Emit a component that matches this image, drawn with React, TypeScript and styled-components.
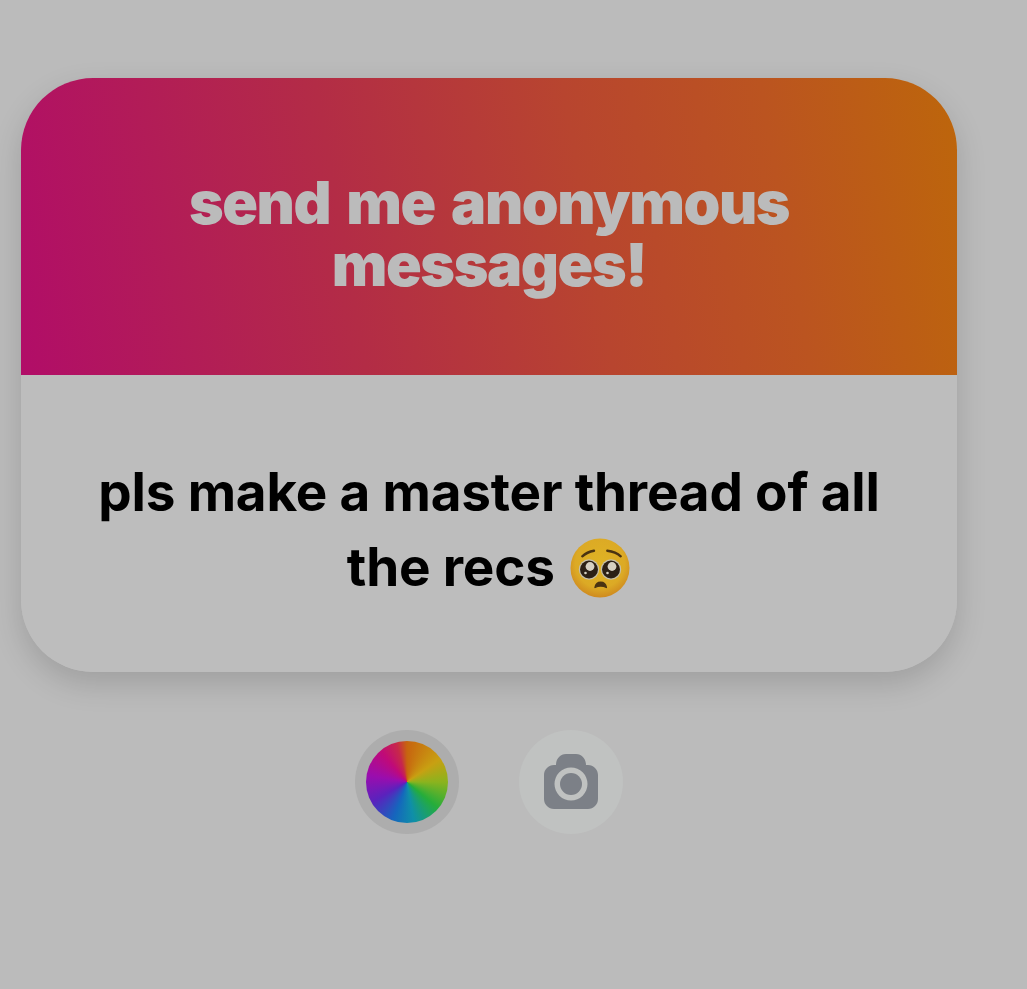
import React from "react";
import styled, { createGlobalStyle } from "styled-components";

const Global = createGlobalStyle`
  html, body { margin: 0; padding: 0; background: #bbbbbb; }
  body { font-family: Inter, "Liberation Sans", sans-serif; }
`;

const Page = styled.main`
  width: 1027px;
  height: 989px;
  overflow: hidden;
  background: #bbbbbb;
  padding: 78px 70px 0 21px;
  box-sizing: border-box;
  display: flex;
  flex-direction: column;
  align-items: flex-start;
`;

const CardShadow = styled.div`
  border-radius: 72px;
  box-shadow: 0 12px 30px rgba(0, 0, 0, 0.15);
`;

const Card = styled.section`
  width: 936px;
  height: 594px;
  flex: none;
  border-radius: 72px;
  overflow: hidden;
  background: #bdbdbd;
  display: flex;
  flex-direction: column;
`;

const Header = styled.header`
  height: 297px;
  background: linear-gradient(80deg, #b10d68 0%, #b32c46 35%, #b8452f 60%, #bb5420 80%, #bd660b 100%);
  display: flex;
  align-items: center;
  justify-content: center;
  box-sizing: border-box;
  padding: 15px 120px 0;
`;

const Title = styled.h1`
  margin: 0;
  color: #bbbbbb;
  font-size: 59px;
  line-height: 62px;
  font-weight: 900;
  letter-spacing: -1.4px;
  word-spacing: 5.8px;
  text-align: center;
`;

const Body = styled.div`
  flex: 1;
  display: flex;
  align-items: center;
  justify-content: center;
  padding: 12px 60px 0;
`;

const Message = styled.p`
  margin: 0;
  color: #000;
  font-size: 53px;
  line-height: 75px;
  font-weight: 700;
  letter-spacing: -0.18px;
  text-align: center;
`;

const Emoji = styled.svg`
  display: inline-block;
  width: 62px;
  height: 62px;
  vertical-align: -13px;
  margin-left: 2px;
`;

const Actions = styled.div`
  align-self: stretch;
  width: 936px;
  margin-top: 58px;
  display: flex;
  justify-content: center;
  gap: 60px;
`;

const RoundButton = styled.button<{ $selected?: boolean }>`
  width: 104px;
  height: 104px;
  border: 0;
  padding: 0;
  border-radius: 50%;
  background: ${(p) => (p.$selected ? "#adadad" : "#c0c2c1")};
  display: flex;
  align-items: center;
  justify-content: center;
`;

const Wheel = styled.span`
  width: 82px;
  height: 82px;
  border-radius: 50%;
  background: conic-gradient(
    #c7640f 0deg,
    #c8a012 55deg,
    #8bb31e 90deg,
    #25ad3b 130deg,
    #0f8fa8 170deg,
    #1566bd 200deg,
    #5a22bd 240deg,
    #9a0dae 280deg,
    #c00a78 320deg,
    #c7284a 345deg,
    #c7640f 360deg
  );
  filter: blur(0.4px);
`;

const PleadingFace = () => (
  <Emoji viewBox="0 0 62 62" aria-label="pleading face">
    <defs>
      <radialGradient id="face" cx="50%" cy="42%" r="58%">
        <stop offset="0%" stopColor="#dfb324" />
        <stop offset="72%" stopColor="#dcaa25" />
        <stop offset="100%" stopColor="#cf8a1f" />
      </radialGradient>
    </defs>
    <circle cx="31" cy="31" r="29.500" fill="url(#face)" />
    <path d="M13.300 19.300c3-2.800 7-4.800 11.700-5.600" fill="none" stroke="#4a3312" strokeWidth="2.400" strokeLinecap="round" />
    <path d="M51.700 19.300c-3-2.800-7-4.800-13.400-5.600" fill="none" stroke="#4a3312" strokeWidth="2.400" strokeLinecap="round" />
    <circle cx="20" cy="32.500" r="10.200" fill="#c6bfa8" />
    <circle cx="42" cy="32.500" r="10.200" fill="#c6bfa8" />
    <circle cx="20" cy="32.500" r="9" fill="#2c2016" />
    <circle cx="42" cy="32.500" r="9" fill="#2c2016" />
    <circle cx="21" cy="29.500" r="4.400" fill="#d6d0c2" />
    <circle cx="43" cy="29.500" r="4.400" fill="#d6d0c2" />
    <circle cx="16.500" cy="36" r="1.300" fill="#d6d0c2" />
    <circle cx="38.500" cy="36" r="1.300" fill="#d6d0c2" />
    <path d="M26 50.500c.6-3.200 2.900-5.200 5.700-5.200s5.100 2 5.700 5.200c-1.900-1-3.700-1.400-5.700-1.400s-3.800.4-5.700 1.400z" fill="#4a3312" stroke="#4a3312" strokeWidth="1.400" strokeLinejoin="round" />
  </Emoji>
);

const CameraIcon = () => (
  <svg width="56" height="56" viewBox="0 0 56 56" aria-label="camera">
    <path
      fillRule="evenodd"
      fill="#7c8087"
      d="M23 0h10c6 0 10 5 10 11h2c5.500 0 10 4.500 10 10v24c0 5.500-4.500 10-10 10H11C5.500 55 1 50.500 1 45V21c0-5.500 4.500-10 10-10h2c0-6 4-11 10-11zM28 13.500a16.500 16.500 0 1 0 0 33 16.500 16.500 0 0 0 0-33z"
    />
    <circle cx="28" cy="30" r="11" fill="#7c8087" />
  </svg>
);

export default function App() {
  return (
    <Page>
      <Global />
      <CardShadow>
        <Card>
          <Header>
            <Title>send me anonymous messages!</Title>
          </Header>
          <Body>
            <Message>
              pls make a master thread of all the recs <PleadingFace />
            </Message>
          </Body>
        </Card>
      </CardShadow>
      <Actions>
        <RoundButton $selected aria-label="colour">
          <Wheel />
        </RoundButton>
        <RoundButton aria-label="camera">
          <CameraIcon />
        </RoundButton>
      </Actions>
    </Page>
  );
}
